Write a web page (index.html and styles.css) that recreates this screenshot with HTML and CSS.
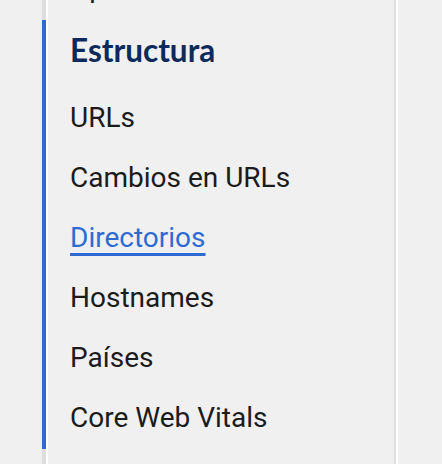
FILE: index.html
```html
<!DOCTYPE html>
<html lang="es">
<head>
<meta charset="utf-8">
<title>Estructura</title>
<link rel="stylesheet" href="styles.css">
</head>
<body>
<div class="page">
  <nav class="panel">
    <div class="panel-inner">
      <div class="prev">
        <div class="item prev-item">Optimización</div>
      </div>
      <section class="section">
        <div class="section-body">
          <h2 class="section-title">Estructura</h2>
          <ul class="list">
            <li class="item">URLs</li>
            <li class="item">Cambios en URLs</li>
            <li class="item"><a class="link-active" href="#">Directorios</a></li>
            <li class="item">Hostnames</li>
            <li class="item">Países</li>
            <li class="item">Core Web Vitals</li>
          </ul>
        </div>
      </section>
    </div>
  </nav>
</div>
</body>
</html>
```

FILE: styles.css
```css
html, body {
  margin: 0;
  padding: 0;
  background: #f0f0f0;
}

.page {
  width: 442px;
  height: 464px;
  overflow: hidden;
  padding-left: 42px;
  box-sizing: border-box;
}

.panel {
  width: 356px;
  height: 464px;
  box-sizing: border-box;
  border-left: 4px solid #dedede;
  border-right: 2px solid #ffffff;
}

.panel-inner {
  height: 100%;
  box-sizing: border-box;
  border-left: 2px solid #ffffff;
  border-right: 2px solid #dedede;
}

.prev {
  height: 20px;
  overflow: hidden;
  padding-left: 22px;
}

.prev-item {
  margin-top: -42px;
}

.section {
  margin-left: -6px;
  border-left: 4px solid #2d6bd3;
}

.section-body {
  border-left: 2px solid #ffffff;
  padding: 10px 0 1px 22px;
}

.section-title {
  margin: 0 0 18px 0;
  font-family: "Lato", sans-serif;
  font-weight: 700;
  font-size: 31.5px;
  line-height: 40px;
  color: #0c2a5b;
  letter-spacing: 0;
}

.list {
  list-style: none;
  margin: 0;
  padding: 0;
}

.item {
  font-family: "Roboto", sans-serif;
  font-size: 28px;
  line-height: 60px;
  color: #1b1b1b;
  white-space: nowrap;
}

.link-active {
  color: #2d6bd3;
  text-decoration: underline;
  text-decoration-thickness: 3px;
  text-underline-offset: 6px;
}
```
